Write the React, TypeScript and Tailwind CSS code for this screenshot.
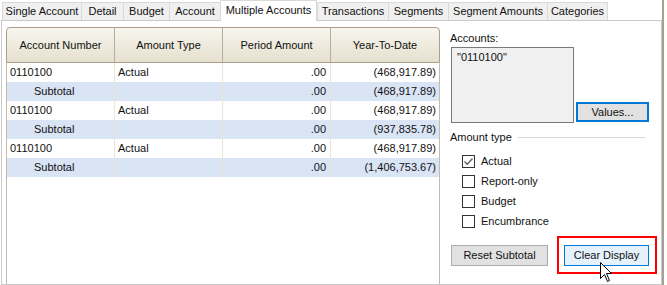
import React from 'react';

const TABS = [
  { label: 'Single Account', w: 'w-[79px]' },
  { label: 'Detail', w: 'w-[42px]' },
  { label: 'Budget', w: 'w-[46px]' },
  { label: 'Account', w: 'w-[51px]' },
  { label: 'Multiple Accounts', w: 'w-[97px]', active: true },
  { label: 'Transactions', w: 'w-[71px]' },
  { label: 'Segments', w: 'w-[60px]' },
  { label: 'Segment Amounts', w: 'w-[99px]' },
  { label: 'Categories', w: 'w-[61px]', last: true },
];

type Row = { account: string; type: string; period: string; ytd: string; subtotal?: boolean };

const ROWS: Row[] = [
  { account: '0110100', type: 'Actual', period: '.00', ytd: '(468,917.89)' },
  { account: 'Subtotal', type: '', period: '.00', ytd: '(468,917.89)', subtotal: true },
  { account: '0110100', type: 'Actual', period: '.00', ytd: '(468,917.89)' },
  { account: 'Subtotal', type: '', period: '.00', ytd: '(937,835.78)', subtotal: true },
  { account: '0110100', type: 'Actual', period: '.00', ytd: '(468,917.89)' },
  { account: 'Subtotal', type: '', period: '.00', ytd: '(1,406,753.67)', subtotal: true },
];

const AMOUNT_TYPES = [
  { label: 'Actual', checked: true },
  { label: 'Report-only', checked: false },
  { label: 'Budget', checked: false },
  { label: 'Encumbrance', checked: false },
];

function Checkbox({ checked }: { checked: boolean }) {
  return (
    <div className="w-[13px] h-[13px] border border-[#333333] bg-white flex items-center justify-center">
      {checked && (
        <svg width="11" height="11" viewBox="0 0 11 11">
          <path d="M1.5 5.5 L4.2 8.2 L9.5 2.5" fill="none" stroke="#5c5c5c" strokeWidth="1.3" />
        </svg>
      )}
    </div>
  );
}

function Cursor() {
  return (
    <svg className="absolute left-[600px] top-[262px]" width="13" height="21" viewBox="0 0 13 21">
      <path
        d="M0.5 0.5 L0.5 16.5 L4.5 12.5 L7.5 19.5 L9.5 18.5 L6.5 11.5 L11.5 11.5 Z"
        fill="#ffffff"
        stroke="#000000"
        strokeWidth="1"
        strokeLinejoin="miter"
      />
    </svg>
  );
}

export default function App() {
  return (
    <div className="relative w-[667px] h-[285px] bg-white overflow-hidden flex font-['Liberation_Sans',Arial,sans-serif] text-[11px] text-[#111111]">
      <div className="w-[662px] flex flex-col">
        {/* Tab strip */}
        <div className="h-[20px] flex items-end pl-[2px]">
          {TABS.map((t) =>
            t.active ? (
              <div
                key={t.label}
                className={`${t.w} h-[21px] -mb-[1px] relative z-10 bg-white border-l border-t border-r border-[#d9d9d9] flex items-start justify-center pt-[3px] leading-[13px] whitespace-nowrap`}
              >
                {t.label}
              </div>
            ) : (
              <div
                key={t.label}
                className={`${t.w} h-[18px] bg-[#f0f0f0] border-l border-t border-[#d9d9d9] ${t.last ? 'border-r' : ''} flex items-center justify-center leading-[13px] whitespace-nowrap`}
              >
                {t.label}
              </div>
            )
          )}
        </div>

        {/* Panel */}
        <div className="ml-[1px] w-[661px] h-[265px] border border-[#c9c9c9] bg-white flex">
          {/* Grid */}
          <div className="ml-[4px] mt-[6px] w-[434px] flex flex-col">
            <div className="h-[36px] flex border border-[#ab9f8a] rounded-t-[4px] bg-gradient-to-b from-[#f7f5ee] to-[#e6e0ce]">
              {['Account Number', 'Amount Type', 'Period Amount'].map((h) => (
                <div key={h} className="w-[108px] border-r border-[#b8ad98] flex items-center justify-center">
                  {h}
                </div>
              ))}
              <div className="flex-1 flex items-center justify-center">Year-To-Date</div>
            </div>
            <div className="flex-1 border-l border-r border-[#c6bba8] flex flex-col">
              {ROWS.map((r, i) => (
                <div key={i} className={`h-[19px] flex items-center ${r.subtotal ? 'bg-[#d9e4f5]' : 'bg-white'}`}>
                  <div className={`w-[108px] h-full border-r border-[#ece5d5] flex items-center ${r.subtotal ? 'pl-[27px]' : 'pl-[3px]'}`}>
                    {r.account}
                  </div>
                  <div className="w-[108px] h-full border-r border-[#ece5d5] flex items-center pl-[3px]">{r.type}</div>
                  <div className="w-[108px] h-full border-r border-[#ece5d5] flex items-center justify-end pr-[4px]">{r.period}</div>
                  <div className="flex-1 h-full flex items-center justify-end pr-[3px]">{r.ytd}</div>
                </div>
              ))}
              <div className="flex-1 flex">
                <div className="w-[108px] border-r border-[#ffffff]" />
              </div>
            </div>
          </div>

          {/* Right panel */}
          <div className="flex-1 flex flex-col pl-[10px] pt-[11px]">
            <div className="leading-[13px]">Accounts:</div>
            <div className="mt-[2px] flex items-end">
              <div className="ml-[1px] w-[123px] h-[76px] border border-[#7a7a7a] bg-[#f0f0f0] pl-[5px] pt-[3px] leading-[13px]">
                "0110100"
              </div>
              <div className="ml-[2px] mb-[1px] w-[73px] h-[20px] border-2 border-[#0078d7] bg-[#e1e1e1] flex items-center justify-center leading-[13px]">
                Values...
              </div>
            </div>

            <div className="mt-[8px] flex items-center h-[13px]">
              <span className="leading-[13px]">Amount type</span>
              <div className="flex-1 ml-[6px] mr-[16px] h-px bg-[#d6d6d6]" />
            </div>

            <div className="mt-[7px] flex flex-col">
              {AMOUNT_TYPES.map((a) => (
                <div key={a.label} className="h-[20px] flex items-center pl-[12px]">
                  <Checkbox checked={a.checked} />
                  <span className="ml-[6px] leading-[13px]">{a.label}</span>
                </div>
              ))}
            </div>

            <div className="mt-[5px] flex items-center">
              <div className="ml-[1px] w-[97px] h-[21px] border border-[#adadad] bg-[#e1e1e1] flex items-center justify-center leading-[13px]">
                Reset Subtotal
              </div>
              <div className="ml-[9px] w-[100px] h-[38px] border-2 border-[#ff0000] flex items-center pl-[5px]">
                <div className="w-[85px] h-[21px] border border-[#0078d7] bg-[#e5f1fb] flex items-center justify-center leading-[13px]">
                  Clear Display
                </div>
              </div>
            </div>
          </div>
        </div>
      </div>
      <div className="w-[2px] h-full bg-[#a79f94]" />
      <Cursor />
    </div>
  );
}
